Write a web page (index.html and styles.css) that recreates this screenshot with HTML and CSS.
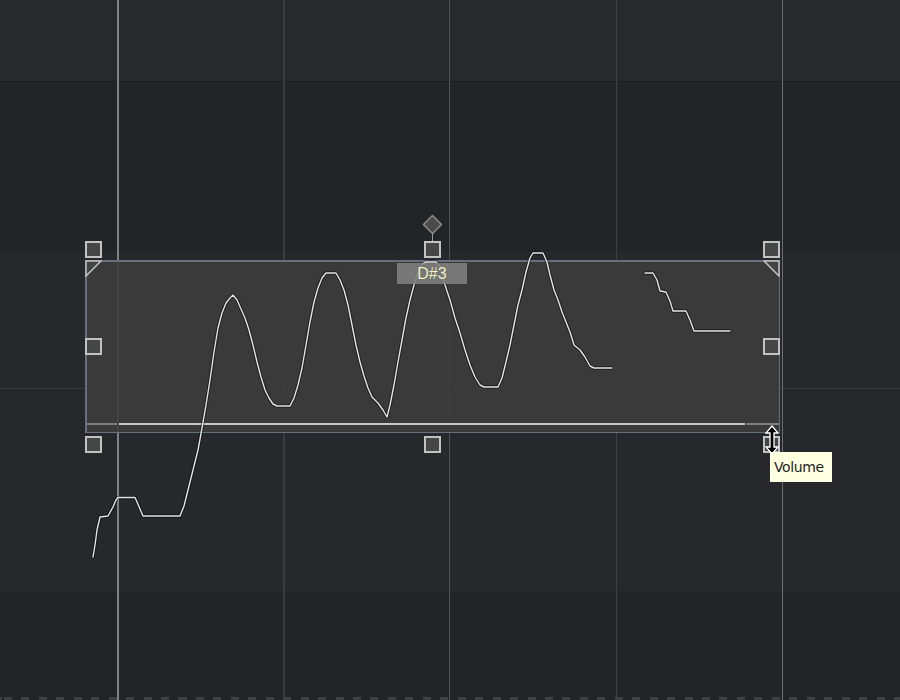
FILE: index.html
```html
<!DOCTYPE html>
<html>
<head>
<meta charset="utf-8">
<link rel="stylesheet" href="styles.css">
</head>
<body>
<div class="roll">
  <div class="rows">
    <div class="row row-top"></div>
    <div class="row row-a"></div>
    <div class="row row-b"></div>
    <div class="row row-line"></div>
    <div class="row row-b2"></div>
    <div class="row row-c"></div>
    <div class="dash"></div>
  </div>

  <div class="vlines">
    <div class="gap g1"></div><div class="vl vl-bar"></div>
    <div class="gap g2"></div><div class="vl vl-dim2"></div>
    <div class="gap g2"></div><div class="vl vl-mid"></div>
    <div class="gap g3"></div><div class="vl vl-dim"></div>
    <div class="gap g4"></div><div class="vl vl-light"></div>
  </div>

  <div class="note">
    <svg class="corner corner-l" width="17" height="17" viewBox="0 0 17 17"><polygon points="1,1 16,1 1,16" /></svg>
    <svg class="corner corner-r" width="17" height="17" viewBox="0 0 17 17"><polygon points="1,1 16,1 16,16" /></svg>
    <div class="velbar">
      <div class="vb-dark vb-left"></div>
      <div class="vb-light"></div>
      <div class="vb-dark vb-right"></div>
    </div>
  </div>

  <svg class="curve" width="900" height="700" viewBox="0 0 900 700">
    <g class="shadow">
      <polyline points="93,557 95,545 97,530 100,517 108,516 113,507 116,500 118,497.5 135,497.5 137,502 143,516 180,516 184,506 188,490 193,470 198,450 202,428 206,405 210,380 214,352 218,328 222,313 226,303 230,298 233,295 237,300 241,309 245,318 249,330 253,345 257,362 261,377 265,390 269,398 273,404 277,406 290,406 294,398 298,385 302,368 306,345 310,322 314,302 318,288 322,278 326,273 336,273 340,280 344,290 348,305 352,325 356,345 360,362 364,376 368,388 372,397 378,403 383,410 387,417 390,405 394,385 398,362 402,340 406,318 410,300 414,285 418,272 422,264 426,262 436,262 440,266 445,285 450,300 455,318 460,333 465,350 470,365 475,377 480,385 484,387 498,387 502,378 506,362 510,345 514,325 518,305 522,290 526,272 530,258 533,253 543,253 547,262 550,275 554,290 558,300 562,312 566,322 570,332 574,345 580,350 585,357 590,366 594,368 612,368"/>
      <polyline points="645,273 653,273 657,280 660,291 666,292 670,301 673,311 686,311 690,320 694,331 730,331"/>
    </g>
    <g class="line">
      <polyline points="93,557 95,545 97,530 100,517 108,516 113,507 116,500 118,497.5 135,497.5 137,502 143,516 180,516 184,506 188,490 193,470 198,450 202,428 206,405 210,380 214,352 218,328 222,313 226,303 230,298 233,295 237,300 241,309 245,318 249,330 253,345 257,362 261,377 265,390 269,398 273,404 277,406 290,406 294,398 298,385 302,368 306,345 310,322 314,302 318,288 322,278 326,273 336,273 340,280 344,290 348,305 352,325 356,345 360,362 364,376 368,388 372,397 378,403 383,410 387,417 390,405 394,385 398,362 402,340 406,318 410,300 414,285 418,272 422,264 426,262 436,262 440,266 445,285 450,300 455,318 460,333 465,350 470,365 475,377 480,385 484,387 498,387 502,378 506,362 510,345 514,325 518,305 522,290 526,272 530,258 533,253 543,253 547,262 550,275 554,290 558,300 562,312 566,322 570,332 574,345 580,350 585,357 590,366 594,368 612,368"/>
      <polyline points="645,273 653,273 657,280 660,291 666,292 670,301 673,311 686,311 690,320 694,331 730,331"/>
    </g>
  </svg>

  <div class="label-over">D#3</div>

  <svg class="diamond" width="21" height="21" viewBox="0 0 21 21"><polygon points="10.5,1.5 19.5,10.5 10.5,19.5 1.5,10.5"/></svg>
  <div class="stem"></div>

  <div class="handle h-tl"></div>
  <div class="handle h-tc"></div>
  <div class="handle h-tr"></div>
  <div class="handle h-ml"></div>
  <div class="handle h-mr"></div>
  <div class="handle h-bl"></div>
  <div class="handle h-bc"></div>
  <div class="handle h-br"></div>

  <svg class="cursor" width="18" height="30" viewBox="0 0 18 30">
    <path d="M9 1 L15 8 L11 8 L11 22 L15 22 L9 29 L3 22 L7 22 L7 8 L3 8 Z" />
  </svg>

  <div class="tooltip">Volume</div>
</div>
</body>
</html>
```

FILE: styles.css
```css
html, body {
  margin: 0;
  padding: 0;
  background: #222528;
}

.roll {
  position: relative;
  width: 900px;
  height: 700px;
  overflow: hidden;
  font-family: "Liberation Sans", Arial, sans-serif;
}

.rows {
  display: flex;
  flex-direction: column;
  height: 700px;
}

.row { flex: none; }
.row-top { height: 81px; background: #27292d; border-bottom: 1px solid #1b1d20; }
.row-a { height: 169px; background: #222528; }
.row-b { height: 137px; background: #26282c; }
.row-line { height: 1px; background: #37393c; }
.row-b2 { height: 202px; background: #26282c; }
.row-c { height: 106px; background: #222528; }

.dash {
  height: 3px;
  background: repeating-linear-gradient(90deg, #3e4044 0 8px, transparent 8px 17.45px);
  background-position: 4px 0;
}

.vlines {
  position: absolute;
  inset: 0;
  display: flex;
}
.gap { flex: none; }
.g1 { width: 117px; }
.g2 { width: 164px; }
.g3 { width: 166px; }
.g4 { width: 165px; }
.vl { flex: none; width: 1px; }
.vl-bar { width: 2px; background: #7f8183; }
.vl-dim2 { width: 2px; background: #3a3c40; }
.vl-mid { background: #4e5054; }
.vl-dim { background: #3e4044; }
.vl-light { background: #6c6e72; }

.note {
  position: absolute;
  left: 85px;
  top: 260px;
  width: 692px;
  height: 163px;
  border-style: solid;
  border-color: #687080;
  border-width: 2px 1px 1px 2px;
  background: rgba(61, 61, 61, 0.89);
  display: flex;
  flex-direction: column;
  justify-content: flex-end;
  padding-bottom: 7px;
}

.corner {
  position: absolute;
  top: -2px;
}
.corner polygon {
  fill: #444444;
  stroke: #c2c2c2;
  stroke-width: 1.5;
}
.corner-l { left: -2px; }
.corner-r { right: -1px; }

.velbar {
  display: flex;
  height: 2px;
}
.vb-dark { background: #7f7f7f; }
.vb-left { width: 30px; }
.vb-light { width: 626px; margin-left: 2px; background: #c8c8c8; }
.vb-right { flex: 1; margin-left: 1px; }

.label-over {
  position: absolute;
  left: 397px;
  top: 263px;
  width: 70px;
  height: 21px;
  background: rgba(128, 128, 128, 0.88);
  color: #f2f2d6;
  font-size: 16px;
  line-height: 21px;
  text-align: center;
  text-shadow: 0 0 1px #5a5a30;
}

.curve {
  position: absolute;
  left: 0;
  top: 0;
}
.curve polyline { fill: none; stroke-linejoin: round; stroke-linecap: round; }
.shadow polyline { stroke: rgba(0, 0, 0, 0.45); stroke-width: 3.5; }
.line polyline { stroke: #e4e4e4; stroke-width: 1.4; }

.diamond {
  position: absolute;
  left: 422px;
  top: 214px;
}
.diamond polygon {
  fill: #4a4a4a;
  stroke: #8a8a8a;
  stroke-width: 1.5;
}
.stem {
  position: absolute;
  left: 432px;
  top: 233px;
  width: 1px;
  height: 8px;
  background: #9a9a9a;
}

.handle {
  position: absolute;
  width: 13px;
  height: 13px;
  border: 2px solid #c2c2c2;
  background: #464646;
}
.h-tl { left: 85px; top: 241px; }
.h-tc { left: 424px; top: 241px; }
.h-tr { left: 763px; top: 241px; }
.h-ml { left: 85px; top: 338px; }
.h-mr { left: 763px; top: 338px; }
.h-bl { left: 85px; top: 436px; }
.h-bc { left: 424px; top: 436px; }
.h-br { left: 763px; top: 436px; }

.cursor {
  position: absolute;
  left: 763px;
  top: 425px;
}
.cursor path {
  fill: #000000;
  stroke: #ffffff;
  stroke-width: 1.3;
  stroke-linejoin: miter;
}

.tooltip {
  position: absolute;
  left: 770px;
  top: 452px;
  width: 58px;
  height: 30px;
  padding-left: 4px;
  background: #ffffe1;
  color: #1e1e1e;
  font-family: "DejaVu Sans", Verdana, sans-serif;
  font-size: 14px;
  line-height: 30px;
  letter-spacing: -0.4px;
}
```
